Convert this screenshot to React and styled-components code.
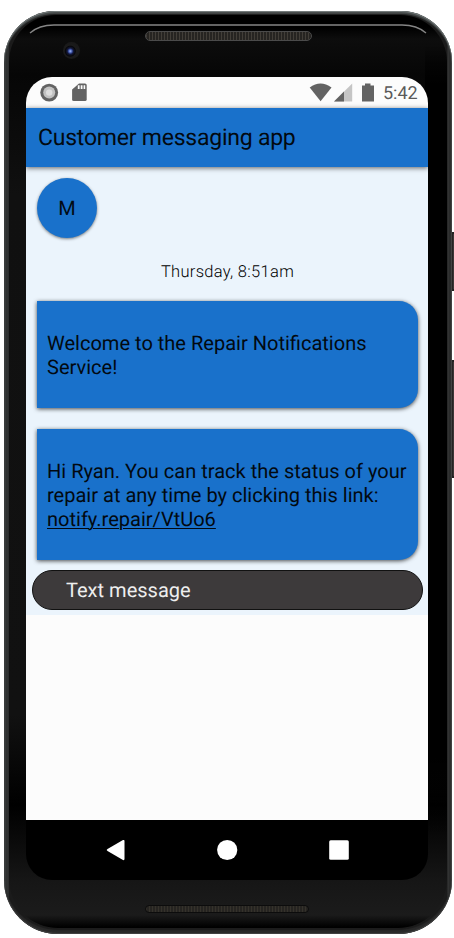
import React from "react";
import styled, { createGlobalStyle } from "styled-components";

const Global = createGlobalStyle`
  * { box-sizing: border-box; }
  body { margin: 0; background: #fff; font-family: Roboto, sans-serif; overflow: hidden; text-rendering: geometricPrecision; }
`;

const Page = styled.main`
  width: 454px;
  height: 938px;
  padding: 11px 0 0 4px;
  overflow: hidden;
`;

const Device = styled.div`
  position: relative;
  width: 448px;
  height: 923px;
  display: flex;
  flex-direction: column;
  border-radius: 51px 51px 54px 54px;
  background: linear-gradient(90deg, #303333 0, #383a3a 2px, #252626 3px, #3b3d3d 4px, #1b1b1b 5px, #1b1b1b 443px, #353636 444px, #262727 446px, #444 448px);
  box-shadow: inset 0 1px 1px #7a8282, inset 0 3px 1px #454949, inset 0 -1px 1px #444, inset 0 -4px 1px #292929;
`;

const SideButton = styled.span`
  position: absolute;
  left: 448px;
  top: ${(p) => p.$top}px;
  width: 3px;
  height: ${(p) => p.$height}px;
  background: linear-gradient(90deg, #1b1919, #5c5656);
  border-top: 2px solid #222;
  border-bottom: 2px solid #222;
`;

const Glass = styled.div`
  flex: 1;
  margin: 4px 5px 6px;
  display: flex;
  flex-direction: column;
  border-radius: 47px 47px 49px 49px;
  background: linear-gradient(180deg, #000 0, #000 12px, #0d0d0d 24px, #060606 60px, #101010 180px, #111 700px, #000 790px, #161616 866px, #1b1b1b 900px, #000 912px);
  position: relative;
  overflow: hidden;
`;

const RightShade = styled.span`
  position: absolute;
  right: 0;
  top: 30px;
  width: 22px;
  height: 792px;
  background: linear-gradient(transparent, #000 5%, #000 90%, transparent);
`;

const TopBezel = styled.header`
  height: 62px;
  flex: none;
  position: relative;
`;

const Shine = styled.svg`
  position: absolute;
  left: 0;
  top: 0;
`;

const Speaker = styled.span`
  position: absolute;
  left: ${(p) => p.$left}px;
  top: ${(p) => p.$top}px;
  width: ${(p) => p.$width}px;
  height: ${(p) => p.$height}px;
  border: 1px solid ${(p) => p.$edge};
  border-radius: 6px;
  background: repeating-linear-gradient(90deg, ${(p) => p.$mesh} 0 1px, #262421 1px 3px) padding-box;
`;

const Camera = styled.span`
  position: absolute;
  left: 54px;
  top: 27px;
  width: 17px;
  height: 17px;
  border-radius: 50%;
  background: radial-gradient(circle at 43% 54%, #8aa2e8 0 0.5px, #34499c 2px, #14193c 3px, #070709 5px, #1b1b1b 6px, #191919 8px);
`;

const Screen = styled.section`
  width: 402px;
  height: 803px;
  margin-left: 17px;
  flex: none;
  display: flex;
  flex-direction: column;
  border-radius: 26px;
  overflow: hidden;
  position: relative;
  z-index: 1;
`;

const StatusBar = styled.div`
  height: 30.5px;
  flex: none;
  display: flex;
  align-items: center;
  background: #fcfcfc;
`;

const StatusIcons = styled.svg`
  width: 350px;
  height: 30px;
  flex: none;
`;

const Clock = styled.time`
  margin-left: 7px;
  margin-top: 4px;
  font-size: 18px;
  line-height: 20px;
  color: #5a5a5a;
`;

const AppBar = styled.h1`
  height: 59.5px;
  flex: none;
  margin: 0;
  padding-left: 12px;
  font-size: 23px;
  font-weight: 400;
  line-height: 60px;
  letter-spacing: -0.23px;
  color: #020910;
  background: #1971cb;
  box-shadow: 0 1px 5px rgba(0, 0, 0, 0.6);
  z-index: 1;
  white-space: nowrap;
`;

const Chat = styled.div`
  height: 448px;
  flex: none;
  display: flex;
  flex-direction: column;
  background: #ebf4fc;
  padding: 11px 10px 5px 11px;
`;

const Avatar = styled.div`
  width: 60px;
  height: 60px;
  border-radius: 50%;
  display: grid;
  place-items: center;
  font-size: 20px;
  line-height: 24px;
  color: #020b15;
  background: #1971cb;
  box-shadow: 0 1px 3px rgba(0, 0, 0, 0.5);
`;

const Stamp = styled.time`
  margin-top: 25px;
  height: 19px;
  line-height: 20px;
  text-align: center;
  font-size: 16.5px;
  font-weight: 300;
  letter-spacing: 0.3px;
  color: #000;
`;

const Bubble = styled.p`
  height: ${(p) => p.$height}px;
  flex: none;
  margin: ${(p) => p.$gap}px 0 0;
  padding: 30px 0 0 10px;
  border-radius: 0 19px 19px 0;
  background: #1971cb;
  color: #020910;
  font-size: 20.05px;
  line-height: 24px;
  box-shadow: 0 1px 4px rgba(0, 0, 0, 0.7);
  white-space: nowrap;
`;

const Link = styled.a`
  color: inherit;
  text-decoration: underline;
  text-decoration-thickness: 1px;
  text-underline-offset: 2px;
`;

const Composer = styled.div`
  height: 40px;
  flex: none;
  margin: 10px -5px 0;
  padding-left: 33px;
  border: 1px solid #111;
  border-radius: 20px;
  background: #3d3a3b;
  color: #eee;
  font-size: 20.05px;
  line-height: 38px;
`;

const Blank = styled.div`
  flex: 1;
  background: #fcfcfc;
`;

const NavBar = styled.nav`
  height: 60px;
  flex: none;
  background: #000;
  display: flex;
  align-items: center;
  justify-content: center;
  gap: 91px;
`;

const NavIcon = styled.svg`
  width: 21px;
  height: 22px;
  fill: #fff;
`;

export default function App() {
  return (
    <Page>
      <Global />
      <Device>
        <SideButton $top={221} $height={59} />
        <SideButton $top={349} $height={118} />
        <Glass>
          <RightShade />
          <TopBezel>
            <Shine width="438" height="62" fill="none">
              <path d="M21 18Q30 10 45 10H393Q408 10 417 18" stroke="#858585" strokeWidth="1.3" />
            </Shine>
            <Camera />
            <Speaker $left={136} $top={16} $width={167} $height={10} $edge="#4b4b4b" $mesh="#423e38" />
          </TopBezel>
          <Screen>
            <StatusBar>
              <StatusIcons viewBox="0 0 350 30">
                <circle cx="23.2" cy="15.6" r="8.9" fill="#636363" />
                <circle cx="23.2" cy="15.6" r="6" fill="#c2c2c2" />
                <circle cx="23.2" cy="15.6" r="3.2" fill="#dedede" />
                <path d="M53 6.5H59Q60.7 6.5 60.7 8V22.5Q60.7 24 59 24H47.8Q46.1 24 46.1 22.5V12.5Z" fill="#636363" />
                <path d="M51.8 8.3h1.8v3.8h-1.8zM54.7 8.3h1.8v3.8h-1.8zM57.6 8.3h1.6v3.8h-1.6z" fill="#fcfcfc" />
                <g transform="translate(0.5 0.5)">
                  <path d="M283.2 10Q294 2 305 10L294.1 23.8Z" fill="#636363" />
                  <path d="M325.7 6V24H307.5Z" fill="#c5c5c5" />
                  <path d="M317.5 14V24H307.5Z" fill="#636363" />
                  <path d="M338.5 6H344V8H347.5V24H335.5V8H338.5Z" fill="#636363" />
                </g>
              </StatusIcons>
              <Clock>5:42</Clock>
            </StatusBar>
            <AppBar>Customer messaging app</AppBar>
            <Chat>
              <Avatar>M</Avatar>
              <Stamp>Thursday, 8:51am</Stamp>
              <Bubble $height={107} $gap={19}>
                Welcome to the Repair Notifications
                <br />
                Service!
              </Bubble>
              <Bubble $height={131} $gap={21}>
                Hi Ryan. You can track the status of your
                <br />
                repair at any time by clicking this link:
                <br />
                <Link>notify.repair/VtUo6</Link>
              </Bubble>
              <Composer>Text message</Composer>
            </Chat>
            <Blank />
            <NavBar>
              <NavIcon viewBox="0 0 21 22">
                <path d="M2.5 10Q.8 11 2.5 12L18 21Q19.5 21.5 19.5 20V2Q19.5 .5 18 1Z" />
              </NavIcon>
              <NavIcon viewBox="0 0 21 22">
                <circle cx="10.2" cy="11" r="10.1" />
              </NavIcon>
              <NavIcon viewBox="0 0 21 22">
                <rect x=".2" y="1.2" width="19.6" height="19.6" rx="1.5" />
              </NavIcon>
            </NavBar>
          </Screen>
          <Speaker $left={136} $top={890} $width={164} $height={8} $edge="#0c0c0c" $mesh="#35322b" />
        </Glass>
      </Device>
    </Page>
  );
}
